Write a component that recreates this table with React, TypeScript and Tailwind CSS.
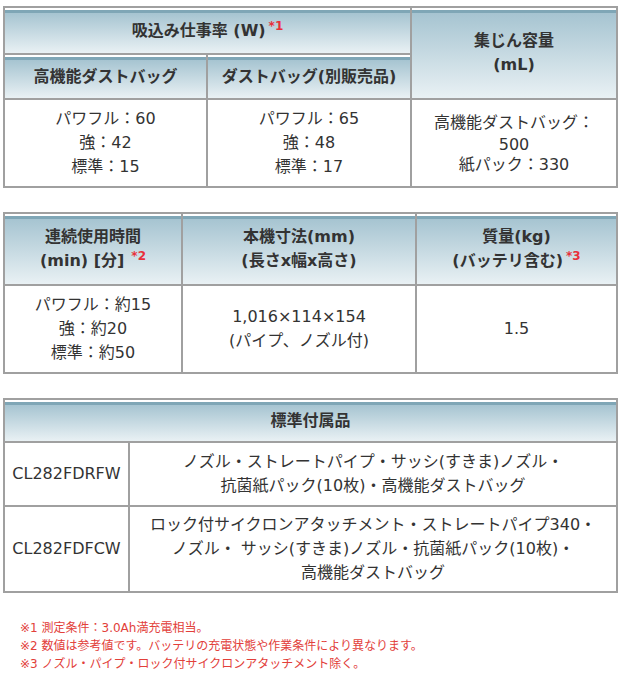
import React from "react";

const HEAD =
  "bg-[linear-gradient(to_bottom,#ffffff_0px,#ffffff_2px,#7fa6b6_2px,#7fa6b6_5px,#a6c4d1_5px,#e9f1f4_100%)] flex flex-col items-center justify-center font-bold text-[#333] text-[16px] leading-[24px] text-center";
const BODY =
  "bg-white flex flex-col items-center justify-center text-[#333] text-[16px] leading-[24px] text-center";

function Sup({ n }: { n: string }) {
  return (
    <span className="text-[#e8303a] text-[12px] font-bold relative -top-[6px] ml-[3px] leading-none">
      *{n}
    </span>
  );
}

export default function App() {
  return (
    <div className="w-[622px] min-h-[681px] bg-white pt-[6px] pl-[3px] font-['DejaVu_Sans','Noto_Sans_CJK_JP',sans-serif]">
      {/* Table 1 */}
      <div className="w-[615px] grid grid-cols-[201px_202px_204px] grid-rows-[45px_43px_86px] gap-[2px] p-[2px] bg-[#a0a0a0]">
        <div className={`${HEAD} col-span-2`}>
          <div>
            吸込み仕事率 (W)
            <Sup n="1" />
          </div>
        </div>
        <div className={`${HEAD} row-span-2`}>
          <div>集じん容量</div>
          <div>(mL)</div>
        </div>
        <div className={HEAD}>高機能ダストバッグ</div>
        <div className={HEAD}>ダストバッグ(別販売品)</div>
        <div className={BODY}>
          <div>パワフル：60</div>
          <div>強：42</div>
          <div>標準：15</div>
        </div>
        <div className={BODY}>
          <div>パワフル：65</div>
          <div>強：48</div>
          <div>標準：17</div>
        </div>
        <div className={BODY}>
          <div>高機能ダストバッグ：</div>
          <div className="leading-[20px]">500</div>
          <div className="leading-[20px]">紙パック：330</div>
        </div>
      </div>

      {/* Table 2 */}
      <div className="mt-[24px] w-[615px] grid grid-cols-[176px_232px_199px] grid-rows-[70px_86px] gap-[2px] p-[2px] bg-[#a0a0a0]">
        <div className={HEAD}>
          <div>連続使用時間</div>
          <div>
            (min) [分]
            <span className="ml-[4px]" />
            <Sup n="2" />
          </div>
        </div>
        <div className={HEAD}>
          <div>本機寸法(mm)</div>
          <div>(長さx幅x高さ)</div>
        </div>
        <div className={HEAD}>
          <div>質量(kg)</div>
          <div>
            (バッテリ含む)
            <Sup n="3" />
          </div>
        </div>
        <div className={BODY}>
          <div>パワフル：約15</div>
          <div>強：約20</div>
          <div>標準：約50</div>
        </div>
        <div className={`${BODY} leading-[21px]`}>
          <div>1,016×114×154</div>
          <div>(パイプ、ノズル付)</div>
        </div>
        <div className={BODY}>
          <div>1.5</div>
        </div>
      </div>

      {/* Table 3 */}
      <div className="mt-[24px] w-[615px] grid grid-cols-[123px_486px] grid-rows-[41px_62px_84px] gap-[2px] p-[2px] bg-[#a0a0a0]">
        <div className={`${HEAD} col-span-2`}>標準付属品</div>
        <div className={BODY}>CL282FDRFW</div>
        <div className={`${BODY} leading-[23px]`}>
          <div>ノズル・ストレートパイプ・サッシ(すきま)ノズル・</div>
          <div>抗菌紙パック(10枚)・高機能ダストバッグ</div>
        </div>
        <div className={BODY}>CL282FDFCW</div>
        <div className={BODY}>
          <div>ロック付サイクロンアタッチメント・ストレートパイプ340・</div>
          <div>ノズル・ サッシ(すきま)ノズル・抗菌紙パック(10枚)・</div>
          <div>高機能ダストバッグ</div>
        </div>
      </div>

      {/* Footnotes */}
      <div className="mt-[26px] ml-[17px] text-[12px] leading-[18px] text-[#e2403a]">
        <div>※1 測定条件：3.0Ah満充電相当。</div>
        <div>※2 数値は参考値です。バッテリの充電状態や作業条件により異なります。</div>
        <div>※3 ノズル・パイプ・ロック付サイクロンアタッチメント除く。</div>
      </div>
    </div>
  );
}
